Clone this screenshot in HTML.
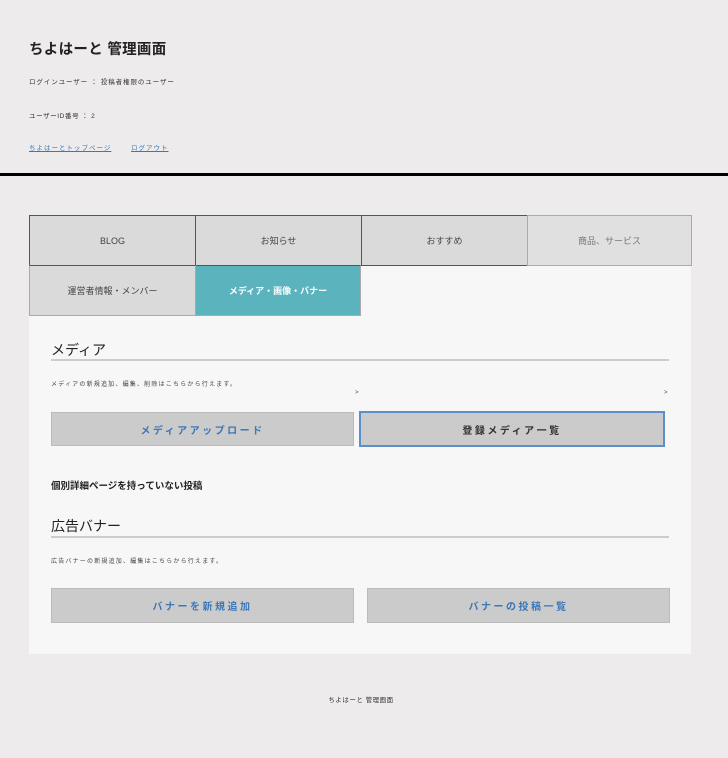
<!DOCTYPE html>
<html><head><meta charset="utf-8"><style>
*{margin:0;padding:0;box-sizing:border-box}
body{width:728px;height:758px;background:#edebec;font-family:"Liberation Sans","Noto Sans CJK JP",sans-serif;position:relative;overflow:hidden;color:#222}
.a{position:absolute;white-space:nowrap}
.tab{position:absolute;height:51px;display:flex;align-items:center;justify-content:center;font-size:9px;color:#444;background:#dadada;border:1px solid #555}
.btn{position:absolute;display:flex;align-items:center;justify-content:center;background:#cbcbcb;border:1px solid #bbb;color:#3b78b8;font-size:10px;letter-spacing:2.5px;font-weight:bold}
</style></head><body>
<div class="a" style="left:29px;top:38px;font-size:14.5px;font-weight:bold;color:#222;letter-spacing:0.3px">ちよはーと 管理画面</div>
<div class="a" style="left:29px;top:76px;font-size:6.5px;color:#333;letter-spacing:0.9px">ログインユーザー ： 投稿者権限のユーザー</div>
<div class="a" style="left:29px;top:110px;font-size:6.5px;color:#333;letter-spacing:0.6px">ユーザーID番号 ： 2</div>
<div class="a" style="left:29px;top:142px;font-size:6.5px;color:#3b78b8;text-decoration:underline;letter-spacing:1px">ちよはーとトップページ</div>
<div class="a" style="left:131px;top:142px;font-size:6.5px;color:#3b78b8;text-decoration:underline;letter-spacing:1px">ログアウト</div>
<div class="a" style="left:0;top:173px;width:728px;height:3px;background:#000"></div>
<div class="a" style="left:29px;top:215px;width:662px;height:439px;background:#f7f7f7"></div>
<div class="tab" style="left:29px;top:215px;width:167px">BLOG</div>
<div class="tab" style="left:195px;top:215px;width:167px">お知らせ</div>
<div class="tab" style="left:361px;top:215px;width:167px">おすすめ</div>
<div class="tab" style="left:527px;top:215px;width:165px;background:#e0e0e0;border-color:#aaa;color:#777">商品、サービス</div>
<div class="tab" style="left:29px;top:265px;width:167px;border-color:#aaa;border-top-color:#555;border-right-color:#555">運営者情報・メンバー</div>
<div class="tab" style="left:195px;top:265px;width:166px;background:#5ab3bd;color:#fff;font-weight:bold;border-color:#aaa;border-top-color:#555">メディア・画像・バナー</div>
<div class="a" style="left:51px;top:340px;font-size:14px;color:#222">メディア</div>
<div class="a" style="left:51px;top:359px;width:618px;height:2px;background:#ccc"></div>
<div class="a" style="left:51px;top:379px;font-size:6px;color:#444;letter-spacing:1.2px">メディアの新規追加、編集、削除はこちらから行えます。</div>
<div class="a" style="left:355px;top:390px;font-size:6px;color:#444">&gt;</div>
<div class="a" style="left:664px;top:390px;font-size:6px;color:#444">&gt;</div>
<div class="btn" style="left:51px;top:412px;width:303px;height:34px">メディアアップロード</div>
<div class="btn" style="left:359px;top:411px;width:306px;height:36px;border:2px solid #5a8fc8;color:#333">登録メディア一覧</div>
<div class="a" style="left:51px;top:478px;font-size:9.5px;font-weight:bold;color:#222">個別詳細ページを持っていない投稿</div>
<div class="a" style="left:51px;top:516px;font-size:14px;color:#222">広告バナー</div>
<div class="a" style="left:51px;top:536px;width:618px;height:2px;background:#ccc"></div>
<div class="a" style="left:51px;top:556px;font-size:6px;color:#444;letter-spacing:1.2px">広告バナーの新規追加、編集はこちらから行えます。</div>
<div class="btn" style="left:51px;top:588px;width:303px;height:35px">バナーを新規追加</div>
<div class="btn" style="left:367px;top:588px;width:303px;height:35px">バナーの投稿一覧</div>
<div class="a" style="left:0;top:694px;width:728px;text-align:center;font-size:6.5px;color:#333;padding-right:6px;letter-spacing:0.5px">ちよはーと 管理画面</div>
</body></html>
